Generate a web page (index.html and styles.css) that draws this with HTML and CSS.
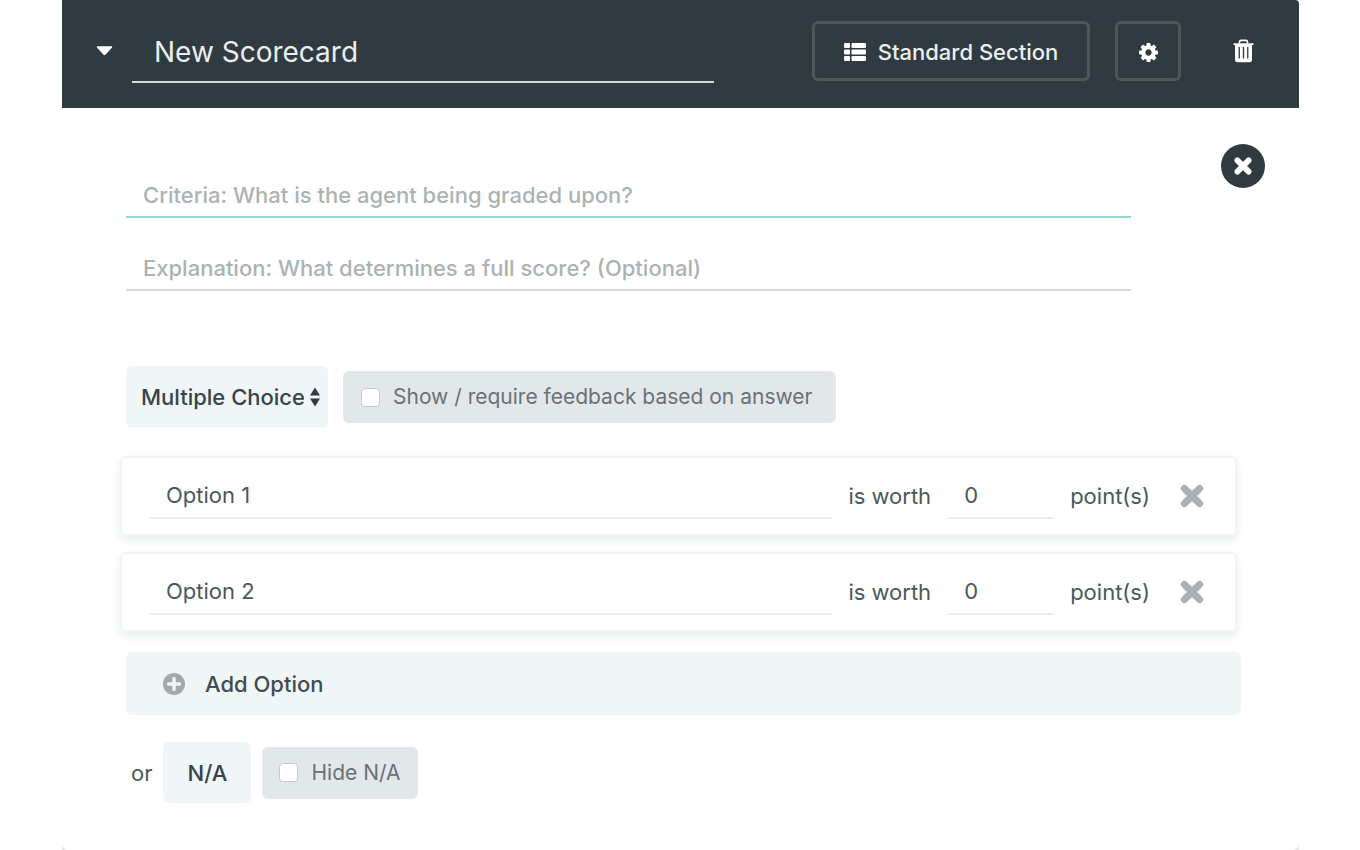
FILE: index.html
```html
<!DOCTYPE html>
<html lang="en">
<head>
<meta charset="utf-8">
<meta name="viewport" content="width=device-width, initial-scale=1">
<title>New Scorecard</title>
<link rel="stylesheet" href="styles.css">
</head>
<body>
<main class="page">
  <section class="panel">
    <header class="head">
      <button class="icon-btn caret" type="button" aria-label="Collapse section">
        <svg width="17" height="10" viewBox="0 0 18 10"><path d="M1.600 0h14.800q1.400.3.6 1.400L10 9q-1 .9-2 0L1 1.400Q.2.300 1.600 0z" fill="#fff"/></svg>
      </button>
      <input class="title" type="text" value="New Scorecard" aria-label="Scorecard name">
      <div class="actions">
        <button class="outline-btn section-btn" type="button">
          <svg width="22" height="18" viewBox="0 0 22 18" fill="#fff"><rect width="6" height="5" rx="1"/><rect y="6.500" width="6" height="5" rx="1"/><rect y="13" width="6" height="5" rx="1"/><rect x="7.500" width="14.500" height="5" rx="1"/><rect x="7.500" y="6.500" width="14.500" height="5" rx="1"/><rect x="7.500" y="13" width="14.500" height="5" rx="1"/></svg>
          Standard Section
        </button>
        <button class="outline-btn gear-btn" type="button" aria-label="Settings">
          <svg width="19" height="19" viewBox="0 0 1536 1536"><path fill="#fff" d="M1024 768q0-106-75-181t-181-75-181 75-75 181 75 181 181 75 181-75 75-181zm512-109v222q0 12-8 23t-20 13l-185 28q-19 54-39 91 35 50 107 138 10 12 10 25t-9 23q-27 37-99 108t-94 71q-12 0-26-9l-138-108q-44 23-91 38-16 136-29 186-7 28-36 28H657q-14 0-24.500-8.500T621 1506l-28-184q-49-16-90-37l-141 107q-10 9-25 9-14 0-25-11-126-114-165-168-7-10-7-23 0-12 8-23 15-21 51-66.500t54-70.500q-27-50-41-99L29 913q-13-2-21-12.500T0 877V655q0-12 8-23t19-13l186-28q14-46 39-92-40-57-107-138-10-12-10-24 0-10 9-23 26-36 98.500-107.500T337 135q13 0 26 10l138 107q44-23 91-38 16-136 29-186 7-28 36-28h222q14 0 24.500 8.500T915 30l28 184q49 16 90 37l142-107q9-9 24-9 13 0 25 10 129 119 165 170 7 8 7 22 0 12-8 23-15 21-51 66.500t-54 70.500q26 50 41 98l183 28q13 2 21 12.500t8 23.500z"/></svg>
        </button>
        <button class="icon-btn trash-btn" type="button" aria-label="Delete section">
          <svg width="21" height="24" viewBox="0 0 21 24"><path d="M6.500 4.500V3q0-1.600 1.600-1.600h4.800q1.600 0 1.600 1.600v1.500" fill="none" stroke="#fff" stroke-width="1.600"/><path d="M.5 4.300h20v1.700h-20z" fill="#fff"/><path fill="#fff" fill-rule="evenodd" d="M2 5h17v15.500q0 2.800-2.500 2.800h-12Q2 23.300 2 20.500zM5.600 8v11.500h1.300V8zm4.200 0v11.500h1.400V8zm4.300 0v11.500h1.300V8z"/></svg>
        </button>
      </div>
    </header>

    <div class="body">
      <div class="intro">
        <div class="fields">
          <input class="field field-active" type="text" placeholder="Criteria: What is the agent being graded upon?" aria-label="Criteria">
          <input class="field" type="text" placeholder="Explanation: What determines a full score? (Optional)" aria-label="Explanation">
        </div>
        <button class="close-btn" type="button" aria-label="Remove criteria">
          <svg width="18" height="18" viewBox="0 0 24 24"><path d="M4.500 4.500l15 15M19.500 4.500l-15 15" stroke="#fff" stroke-width="7.600" stroke-linecap="round"/></svg>
        </button>
      </div>

      <div class="type-row">
        <div class="select-wrap">
          <select class="select" aria-label="Answer type"><option>Multiple Choice</option></select>
          <svg class="select-arrows" width="10" height="20" viewBox="0 0 10 20" fill="#2f3b41"><path d="M5 .5L10 8.500H0zM0 11.500h10L5 19.500z"/></svg>
        </div>
        <label class="check check-wide"><input class="box" type="checkbox">Show / require feedback based on answer</label>
      </div>

      <div class="options">
        <div class="option">
          <input class="line-input" type="text" value="Option 1" aria-label="Option 1 text">
          <label for="points-1">is worth</label>
          <input class="line-input points" id="points-1" type="text" inputmode="numeric" value="0">
          <span>point(s)</span>
          <button class="icon-btn remove" type="button" aria-label="Remove option 1">
            <svg width="24" height="24" viewBox="0 0 24 24"><path d="M4.500 4.500l15 15M19.500 4.500l-15 15" stroke="#a9b1b4" stroke-width="7.200" stroke-linecap="round"/></svg>
          </button>
        </div>
        <div class="option">
          <input class="line-input" type="text" value="Option 2" aria-label="Option 2 text">
          <label for="points-2">is worth</label>
          <input class="line-input points" id="points-2" type="text" inputmode="numeric" value="0">
          <span>point(s)</span>
          <button class="icon-btn remove" type="button" aria-label="Remove option 2">
            <svg width="24" height="24" viewBox="0 0 24 24"><path d="M4.500 4.500l15 15M19.500 4.500l-15 15" stroke="#a9b1b4" stroke-width="7.200" stroke-linecap="round"/></svg>
          </button>
        </div>
      </div>

      <button class="add-btn" type="button">
        <svg width="22" height="22" viewBox="0 0 22 22"><circle cx="11" cy="11" r="11" fill="#a3a9a9"/><path d="M11 5.500v11M5.500 11h11" stroke="#f0f6f6" stroke-width="3.400" stroke-linecap="round"/></svg>
        Add Option
      </button>

      <div class="na-row">
        <span>or</span>
        <button class="na-btn" type="button">N/A</button>
        <label class="check"><input class="box" type="checkbox">Hide N/A</label>
      </div>
    </div>
  </section>
</main>
</body>
</html>
```

FILE: styles.css
```css
* {
  box-sizing: border-box;
}

body {
  margin: 0;
  background: #fff;
  color: #4b585e;
  font-family: Inter, "Liberation Sans", sans-serif;
  font-size: 22px;
  line-height: 28px;
}

button,
input,
select {
  margin: 0;
  border: 0;
  padding: 0;
  background: none;
  color: inherit;
  font: inherit;
}

svg {
  display: block;
  flex: none;
}

.page {
  padding: 0 61px 0 62px;
}

.panel {
  display: flex;
  flex-direction: column;
  min-height: 100vh;
  border-radius: 0 4px 0 0;
  background: #e4e6e6;
  overflow: hidden;
}

.head {
  display: flex;
  align-items: center;
  padding: 21px 34px 27px;
  background: #2f3b41;
  color: #eceeef;
}

.icon-btn {
  display: flex;
  align-items: center;
  justify-content: center;
}

.title {
  flex: 1;
  min-width: 0;
  height: 62px;
  margin: 0 0 -2px 19px;
  padding: 2px 22px 0;
  border-bottom: 2px solid #d5d8d9;
  font-size: 28px;
}

.actions {
  display: flex;
  align-items: center;
  margin-left: 98px;
}

.outline-btn {
  display: flex;
  align-items: center;
  justify-content: center;
  height: 60px;
  padding-top: 2px;
  border: 3px solid #515759;
  border-radius: 6px;
  font-weight: 500;
}

.section-btn {
  gap: 12px;
  width: 278px;
  white-space: nowrap;
}

.gear-btn {
  width: 66px;
  margin-left: 25px;
}

.trash-btn {
  width: 44px;
  height: 44px;
  margin-left: 40px;
}

.body {
  flex: 1;
  padding: 36px 34px 47px 64px;
  border-radius: 0 0 6px 6px;
  background: #fff;
}

.intro {
  display: flex;
  align-items: flex-start;
  gap: 90px;
}

.fields {
  display: flex;
  flex: 1;
  flex-direction: column;
  gap: 28px;
  padding-top: 29px;
}

.field {
  width: 100%;
  height: 45px;
  padding: 0 17px;
  border-bottom: 2px solid #d3dad9;
  font-weight: 500;
}

.field-active {
  border-bottom-color: #8edad6;
}

.field::placeholder {
  color: #aab3b2;
  opacity: 1;
}

.close-btn {
  display: flex;
  align-items: center;
  justify-content: center;
  width: 44px;
  height: 44px;
  border-radius: 50%;
  background: #2f3b41;
}

.type-row {
  display: flex;
  align-items: center;
  gap: 15px;
  margin-top: 75px;
}

.select-wrap {
  position: relative;
}

.select {
  width: 202px;
  height: 62px;
  padding: 0 24px 0 15px;
  border-radius: 6px;
  background: #f0f6f7;
  color: #36434a;
  font-weight: 500;
  appearance: none;
}

.select-arrows {
  position: absolute;
  top: 21px;
  right: 8px;
  pointer-events: none;
}

.check {
  display: flex;
  align-items: center;
  gap: 13px;
  height: 52px;
  padding: 0 17px;
  border-radius: 6px;
  background: #e2e7ea;
  color: #6a7275;
  font-size: 21px;
}

.check-wide {
  padding: 0 24px 0 18px;
}

.box {
  width: 19px;
  height: 19px;
  border: 1px solid #c6cacb;
  border-radius: 4px;
  background: #fff;
  appearance: none;
}

.box:checked {
  background: #2f3b41;
}

.options {
  display: flex;
  flex-direction: column;
  gap: 16px;
  margin: 28px 28px 0 -6px;
}

.option {
  display: flex;
  align-items: center;
  gap: 16px;
  height: 80px;
  padding: 0 31px 0 27px;
  border: 2px solid #eff4f5;
  border-radius: 6px;
  background: #fff;
  box-shadow: 0 4px 10px #e8eded;
}

.line-input {
  flex: 1;
  min-width: 0;
  height: 45px;
  padding: 0 17px;
  border-bottom: 2px solid #ebf0f0;
}

.points {
  flex: none;
  width: 107px;
}

.remove {
  margin-left: 14px;
}

.add-btn {
  display: flex;
  align-items: center;
  gap: 20px;
  width: calc(100% - 24px);
  height: 63px;
  margin-top: 20px;
  padding: 0 37px;
  border-radius: 6px;
  background: #f0f6f6;
  color: #3f4c52;
  font-weight: 500;
}

.na-row {
  display: flex;
  align-items: center;
  gap: 11px;
  margin-top: 27px;
  padding-left: 5px;
}

.na-btn {
  width: 88px;
  height: 61px;
  border-radius: 6px;
  background: #f0f6f7;
  color: #36434a;
  font-weight: 500;
}
```
